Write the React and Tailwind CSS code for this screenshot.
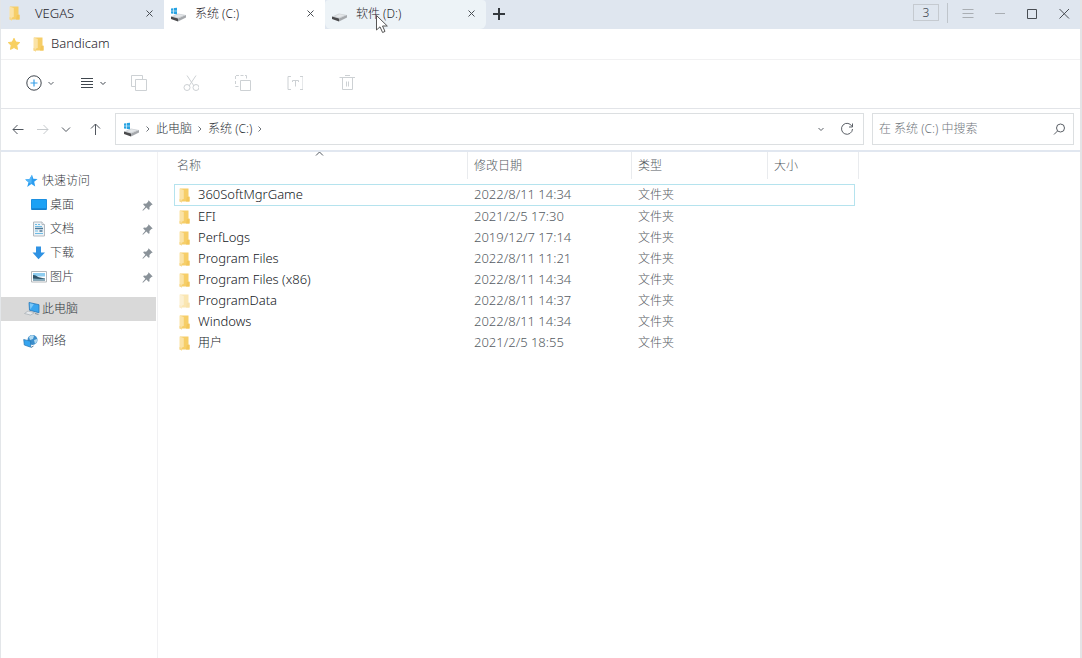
const quick = [
  { name: '桌面', icon: DesktopIcon },
  { name: '文档', icon: DocumentIcon },
  { name: '下载', icon: DownloadIcon },
  { name: '图片', icon: PictureIcon },
];

const files = [
  { name: '360SoftMgrGame', date: '2022/8/11 14:34', selected: true },
  { name: 'EFI', date: '2021/2/5 17:30' },
  { name: 'PerfLogs', date: '2019/12/7 17:14' },
  { name: 'Program Files', date: '2022/8/11 11:21' },
  { name: 'Program Files (x86)', date: '2022/8/11 14:34' },
  { name: 'ProgramData', date: '2022/8/11 14:37', hidden: true },
  { name: 'Windows', date: '2022/8/11 14:34' },
  { name: '用户', date: '2021/2/5 18:55', cjk: true },
];

function FolderIcon({ className = '' }) {
  return (
    <svg className={`shrink-0 ${className}`} width="12" height="16" viewBox="0 0 12 16" aria-hidden="true">
      <path d="M1 1.5h8.500v8h1v5H1z" fill="#f6ce68" />
      <path d="M8 10h2.500v4.500H7z" fill="#f3c65a" />
      <path d="M.5 1.500l4.300 1.500v9L3 12.500v3l-2.500-1z" fill="#fbe3a6" />
      <path d="M.5 12l2.500 1v2.500l-2.500-1z" fill="#f7d88c" />
    </svg>
  );
}

function DriveIcon({ windows = false }) {
  return (
    <svg className="shrink-0" width="17" height="16" viewBox="0 0 17 16" aria-hidden="true">
      <path d="M1 10.500L8 7.500l8 1.500-8 3.500z" fill="#cfd3d7" />
      <path d="M1 10.500l7 2V15.500l-7-2.500z" fill="#4a4a4c" />
      <path d="M8 12.500L16 9v2.500l-8 4z" fill="#a5a8ac" />
      <path d="M4 10.300L8.500 8.300l5 .9L8 11.500z" fill="#e4e7e9" />
      {windows && (
        <g fill="#27a3e2">
          <path d="M1 2.500l2.400-.3v2.500H1zM4 2.100l3-.4v3H4zM1 5.300h2.400v2.500L1 7.500zM4 5.300h3v3l-3-.4z" />
        </g>
      )}
    </svg>
  );
}

function StarIcon() {
  return (
    <svg className="shrink-0" width="14" height="14" viewBox="0 0 14 14" aria-hidden="true">
      <path d="M7 1.300l1.700 3.700 4 .6-2.900 2.800.7 4L7 10.500l-3.500 1.900.7-4-2.900-2.800 4-.6z" fill="#f8d060" stroke="#f8d060" strokeLinejoin="round" />
    </svg>
  );
}

function BlueStarIcon() {
  return (
    <svg className="shrink-0" width="14" height="14" viewBox="0 0 14 14" aria-hidden="true">
      <path d="M8 .8l1.300 4 4.300.2-3.400 2.800 1 4.600-3.800-2.500-4.200 3 1.300-4.700L1.200 5.600l4.300-.6z" fill="#2b9df0" />
      <path d="M8 .8l-.6 9.100-2.900-1.700L1.200 5.600l4.300-.6z" fill="#53b5f7" />
    </svg>
  );
}

function DesktopIcon() {
  return (
    <svg className="shrink-0" width="16" height="14" viewBox="0 0 16 14" aria-hidden="true">
      <path d="M.5 1.500h15v10H.5z" fill="#1ba1f5" stroke="#1c8fe0" />
      <path d="M1 11h14" stroke="#0e6fba" />
    </svg>
  );
}

function DocumentIcon() {
  return (
    <svg className="shrink-0" width="16" height="16" viewBox="0 0 16 16" aria-hidden="true">
      <path d="M2.500 1h8.500l2.500 2.500V15h-11z" fill="#edf3f7" stroke="#b4bac0" />
      <path d="M11 1v2.500h2.500" fill="#fff" stroke="#b4bac0" />
      <path d="M4 3.500h2M7 3.500h2M4 5.500h7M4 10h3M4 12.500h8" stroke="#6ebbe4" />
      <path d="M4 7.500h8M8.500 10h3" stroke="#4c7896" strokeWidth="1.500" />
    </svg>
  );
}

function DownloadIcon() {
  return (
    <svg className="shrink-0" width="16" height="14" viewBox="0 0 16 14" aria-hidden="true">
      <path d="M5 .5h5v6h4L7.500 13.300 1.500 6.500H5z" fill="#2f92e3" />
    </svg>
  );
}

function PictureIcon() {
  return (
    <svg className="shrink-0" width="16" height="14" viewBox="0 0 16 14" aria-hidden="true">
      <path d="M.5 1.500h15v10.500H.5z" fill="#fff" stroke="#b5b9bc" />
      <path d="M2 3h12v3.500H2z" fill="#8ecdf0" />
      <path d="M2 5c3 0 4 2 7 2.500l5 1V10.500H2z" fill="#2e5368" />
      <path d="M2 8.500c4 .5 8 .5 12 .3v1.700H2z" fill="#7fa9bd" />
    </svg>
  );
}

function ComputerIcon() {
  return (
    <svg className="shrink-0" width="16" height="14" viewBox="0 0 16 14" aria-hidden="true">
      <path d="M5 .5l10 2.200v8L5.500 8.200z" fill="#3aa5ee" stroke="#2a79b8" strokeWidth=".8" />
      <path d="M5.800 1.300l4 .9-3.500 5.300z" fill="#7cc8f8" />
      <path d="M4 9l6.500 1.800-4 2.200-6-1.500z" fill="#e6e9ec" stroke="#a8afb5" strokeWidth=".7" />
      <path d="M11 11.500l3.500 1" stroke="#888f95" />
    </svg>
  );
}

function NetworkIcon() {
  return (
    <svg className="shrink-0" width="15" height="15" viewBox="0 0 15 15" aria-hidden="true">
      <circle cx="9.500" cy="6" r="5" fill="#3c8ecb" />
      <path d="M6 3c2-2 4-2 5-1l-1 3-3 1zM11 6l3-1c.5 2-.5 4-2 5z" fill="#b3daf0" />
      <path d="M.7 5.500l7 1.700v6L1.300 11z" fill="#35a5f0" stroke="#2774b0" strokeWidth=".7" />
      <path d="M8 13.500l2.500-1.500" stroke="#5d7e97" />
    </svg>
  );
}

function PinIcon() {
  return (
    <svg className="shrink-0" width="11" height="11" viewBox="0 0 11 11" aria-hidden="true">
      <path d="M6.500.3l4.200 4.200-1.300.5-2 2 .2 2.200-1 .6L4.400 7.600 1 10.700l-.6-.5 3-3.500L1.200 4.500l.7-.9 2.200.1 2-2z" fill="#8a9299" />
    </svg>
  );
}

function Line({ d, size = 16, className = '', width = 1 }) {
  return (
    <svg
      className={`shrink-0 ${className}`}
      width={size}
      height={size}
      viewBox={`0 0 ${size} ${size}`}
      fill="none"
      stroke="currentColor"
      strokeWidth={width}
      aria-hidden="true"
    >
      <path d={d} />
    </svg>
  );
}

const cross = 'M1.500 1.500l6 6M7.500 1.500l-6 6';
const chevDown = 'M1.500 3l2.500 2.500 2.500-2.500';
const chevRight = 'M2.500 1.500l2.500 2.500-2.500 2.500';

function Tab({ icon, label, className, textClass }) {
  return (
    <div className={`flex items-center pb-0.5 pl-1.5 pr-2 ${className}`}>
      <button className={`flex min-w-0 flex-1 items-center gap-2 text-left text-[#1f242b] ${textClass}`}>
        {icon}
        {label}
      </button>
      <button aria-label={`关闭 ${label}`} className="p-0.5 text-[#4a4f55]">
        <Line d={cross} size={9} />
      </button>
    </div>
  );
}

function Crumb({ children }) {
  return (
    <>
      <Line d={chevRight} size={8} className="text-[#70757b]" />
      {children && <button>{children}</button>}
    </>
  );
}

function NavRow({ icon, label, className = '', pinned = false }) {
  return (
    <a href="#" className={`mr-px flex h-6 items-center pr-[3px] ${className}`}>
      {icon}
      <span className="flex-1">{label}</span>
      {pinned && <PinIcon />}
    </a>
  );
}

export default function App() {
  return (
    <div className="relative flex min-h-screen flex-col border-l border-r-2 border-l-[#e3e6e9] border-r-[#e4e4e6] bg-white font-['Noto_Sans','Noto_Sans_CJK_SC',sans-serif] text-xs font-light text-[#30353b]">
      <header className="flex h-[29px] bg-[#dfe6ef]">
        <Tab
          icon={<span className="flex pl-0.5 pr-1.5"><FolderIcon /></span>}
          label="VEGAS"
          textClass="text-[13px]"
          className="w-[163px]"
        />
        <Tab icon={<DriveIcon windows />} label="系统 (C:)" className="w-[161px] bg-white" textClass="" />
        <Tab icon={<DriveIcon />} label="软件 (D:)" className="w-[161px] rounded-b-md rounded-t-sm bg-[#edf3f7]" textClass="" />
        <button aria-label="新建标签页" className="px-1.5 pb-0.5 text-[#33383d]">
          <Line d="M7 1v12M1 7h12" size={14} width={2} />
        </button>
        <div className="ml-auto flex items-center pb-1 text-[#a9aeb3]">
          <button className="h-[17px] w-[26px] border border-[#c5cad0] leading-[14px] text-[#3c444e]">3</button>
          <span className="ml-2 mr-1 h-5 w-px bg-[#bfc5cb]" />
          <button aria-label="菜单" className="px-2"><Line d="M2.500 4.500h11M2.500 8.500h11M2.500 12.500h11" /></button>
          <button aria-label="最小化" className="px-2"><Line d="M3 8.500h10" /></button>
          <button aria-label="最大化" className="px-2 text-[#484d53]"><Line d="M3.500 4.500h9v9h-9z" /></button>
          <button aria-label="关闭" className="px-2 text-[#484d53]"><Line d="M3.500 4l9.500 9.500M13 4l-9.500 9.500" /></button>
        </div>
      </header>

      <div className="flex h-[31px] items-center border-b border-[#f1f1f2] pl-1.5">
        <StarIcon />
        <button className="ml-3 flex items-center gap-1.5 text-[13px] text-[#1f242b]">
          <FolderIcon />
          Bandicam
        </button>
      </div>

      <div className="flex h-[49px] items-center border-b border-[#e2e4e8] pb-0.5 pl-6 text-[#cdd1d4]">
        <button aria-label="新建" className="flex items-center gap-1 text-[#5a6067]">
          <svg width="18" height="18" viewBox="0 0 18 18" fill="none" aria-hidden="true">
            <circle cx="9" cy="9" r="7.200" stroke="#3f464e" />
            <path d="M9 5.500v7M5.500 9h7" stroke="#38a0e8" strokeWidth="1.200" />
          </svg>
          <Line d={chevDown} size={8} />
        </button>
        <button aria-label="查看" className="ml-6 flex items-center gap-1 text-[#3f464e]">
          <Line d="M2 3.500h12M2 6.500h12M2 9.500h12M2 12.500h12" />
          <Line d={chevDown} size={8} />
        </button>
        <div className="ml-6 flex gap-9">
          <button aria-label="复制"><Line d="M4.500 11.500h-4v-11h11v4M4.500 4.500h11v11h-11z" /></button>
          <button aria-label="剪切"><Line d="M4 .5l7 10.500M13 .5L6 11M7 12.500a3 3 0 1 1-6 0 3 3 0 0 1 6 0zM16 12.500a3 3 0 1 1-6 0 3 3 0 0 1 6 0z" /></button>
          <button aria-label="粘贴"><Line d="M5.500 5.500h10v10h-10zM1 .5h3M5.500 .5h3M10 .5h1.500v3M.5 1v3M.5 6v3M.5 11v.5h3" /></button>
          <button aria-label="重命名"><Line d="M4 1.500H1v13h3M13 1.500h3v13h-3M5.500 7V5.500h6V7M8.500 5.500v6" /></button>
          <button aria-label="删除"><Line d="M.5 2.500h15.500M6 .5h5M3.500 2.500v12h10v-12M7.500 6.500v5M9.500 6.500v5" /></button>
        </div>
      </div>

      <div className="flex h-[43px] items-center border-b-2 border-[#e1e7f0] pb-0.5 pr-1.5">
        <nav aria-label="导航" className="flex w-[114px] items-center pl-2 text-[#50565e]">
          <button aria-label="后退" className="mr-2"><Line d="M14.500 8.500H4M8.500 4L4 8.500 8.500 13" /></button>
          <button aria-label="前进" className="mr-2 text-[#c6cacd]"><Line d="M4 8.500h11M10.500 4L15 8.500 10.500 13" /></button>
          <button aria-label="最近位置" className="mr-3.5"><Line d="M5 6.500l4 4 4-4" /></button>
          <button aria-label="上一级"><Line d="M8.500 14V3M4 7.500L8.500 3 13 7.500" /></button>
        </nav>
        <div className="flex h-8 flex-1 items-center gap-1 border border-[#dcdfe1] pl-[7px] pr-2 text-[#30353b]">
          <DriveIcon windows />
          <Crumb>此电脑</Crumb>
          <Crumb>系统 (C:)</Crumb>
          <Crumb />
          <button aria-label="历史记录" className="ml-auto mr-2.5 text-[#5b6067]"><Line d={chevDown} size={8} /></button>
          <button aria-label="刷新" className="text-[#5b6067]"><Line d="M13 5.500A5.500 5.500 0 1 0 13.500 8M13.500 2.500v3.500H10" /></button>
        </div>
        <div className="ml-2 flex h-8 w-[202px] items-center border border-[#dcdfe1] pl-1.5 pr-1.5">
          <input
            type="search"
            aria-label="搜索"
            placeholder="在 系统 (C:) 中搜索"
            className="min-w-0 flex-1 bg-transparent leading-5 outline-none placeholder:text-[#70767c]"
          />
          <button aria-label="开始搜索" className="text-[#5a5f66]"><Line d="M13.500 7a4 4 0 1 1-8 0 4 4 0 0 1 8 0zM6.500 10L3 13.500" /></button>
        </div>
      </div>

      <div className="flex flex-1">
        <aside className="flex w-[157px] shrink-0 flex-col border-r border-[#f1f1f3] pt-[17px]">
          <NavRow icon={<BlueStarIcon />} label="快速访问" className="gap-1 pl-[23px]" />
          {quick.map(({ name, icon: Icon }) => (
            <NavRow key={name} icon={<Icon />} label={name} className="gap-[3px] pl-[30px]" pinned />
          ))}
          <NavRow icon={<ComputerIcon />} label="此电脑" className="mt-2 gap-0.5 bg-[#d9d9d9] pl-[23px]" />
          <NavRow icon={<NetworkIcon />} label="网络" className="mt-2 gap-1 pl-[22px]" />
        </aside>

        <main className="flex-1 pl-4">
          <table className="w-[681px] table-fixed border-separate border-spacing-0 text-left text-[#555b62]">
            <colgroup>
              <col className="w-[294px]" />
              <col className="w-[164px]" />
              <col className="w-[136px]" />
              <col />
            </colgroup>
            <thead>
              <tr className="h-8 align-top">
                <th className="p-0 font-light">
                  <div className="relative h-[27px] border-r border-[#e9ebee] pl-[3px] leading-[27px]">
                    名称
                    <Line d="M1 5.500l3.500-3.500L8 5.500" size={9} className="absolute -top-0.5 left-[141px]" />
                  </div>
                </th>
                <th className="p-0 font-light"><div className="h-[27px] border-r border-[#e9ebee] pl-1.5 leading-[27px]">修改日期</div></th>
                <th className="p-0 font-light"><div className="h-[27px] border-r border-[#e9ebee] pl-1.5 leading-[27px]">类型</div></th>
                <th className="p-0 font-light"><div className="-mr-1 h-[27px] border-r border-[#e9ebee] pl-1.5 leading-[27px]">大小</div></th>
              </tr>
            </thead>
            <tbody>
              {files.map((f) => {
                const edge = f.selected ? 'border-y border-[#b5e3ee]' : '';
                return (
                  <tr key={f.name} className="h-[21px]">
                    <td className={`py-0 ${edge} ${f.selected ? 'border-l pl-1' : 'pl-[5px]'}`}>
                      <div className={`flex h-5 items-center gap-[7px] text-[#14181d] ${f.cjk ? '' : 'text-[13px]'}`}>
                        <FolderIcon className={f.hidden ? 'opacity-50' : ''} />
                        {f.name}
                      </div>
                    </td>
                    <td className={`py-0 pl-1.5 ${edge}`}>
                      <div className="flex h-5 items-center text-[13px]">{f.date}</div>
                    </td>
                    <td className={`py-0 pl-1.5 ${edge}`}>
                      <div className="flex h-5 items-center">文件夹</div>
                    </td>
                    <td className={`p-0 ${edge} ${f.selected ? 'border-r' : ''}`} />
                  </tr>
                );
              })}
            </tbody>
          </table>
        </main>
      </div>

      <svg className="pointer-events-none absolute left-[374px] top-[14px]" width="14" height="20" viewBox="0 0 14 20" aria-hidden="true">
        <path d="M1.500 1.500v14.500l3.500-3.200 2.600 5.700 2.400-1.100-2.500-5.400h4.800z" fill="#fff" stroke="#555" />
      </svg>
    </div>
  );
}
